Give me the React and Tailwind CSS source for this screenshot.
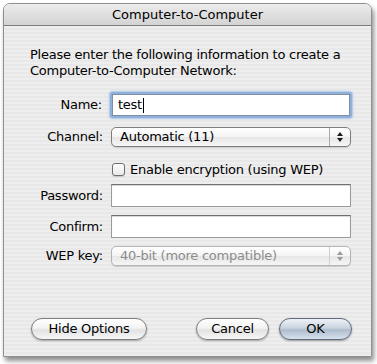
const font = { fontFamily: '"DejaVu Sans", "Liberation Sans", sans-serif' };

function TextField({ value, focused }) {
  if (focused) {
    return (
      <div className="h-[26px] w-[242px] rounded-[3px] p-[2px] bg-[#8eb0d9] shadow-[0_0_2px_1px_#a9c4e6]">
        <div className="flex h-full items-center border border-[#7f8ea3] bg-white pl-[5px] text-[13px] text-black">
          {value}
          <span className="ml-[1px] inline-block h-[15px] w-px bg-black" />
        </div>
      </div>
    );
  }
  return (
    <div className="h-[23px] w-[240px] border border-[#9a9a9a] border-t-[#6f6f6f] bg-white shadow-[inset_0_1px_1px_#d6d6d6]" />
  );
}

function Arrows({ dim }) {
  const c = dim ? '#9a9a9a' : '#1a1a1a';
  return (
    <svg width="8" height="12" viewBox="0 0 8 12">
      <path d="M4 1 L7 5 L1 5 Z" fill={c} />
      <path d="M4 11 L7 7 L1 7 Z" fill={c} />
    </svg>
  );
}

function Popup({ label, disabled }) {
  return (
    <div
      className={`flex h-[20px] w-[240px] items-stretch rounded-[5px] border ${
        disabled ? 'border-[#b4b4b4] text-[#8c8c8c]' : 'border-[#7d7d7d] text-black'
      } bg-[linear-gradient(#ffffff,#f4f4f4_50%,#e6e6e6_51%,#f6f6f6)] shadow-[0_1px_1px_rgba(0,0,0,0.15)]`}
    >
      <div className="flex flex-1 items-center pl-[8px] text-[13px]">{label}</div>
      <div
        className={`flex w-[21px] items-center justify-center border-l ${
          disabled ? 'border-[#cfcfcf]' : 'border-[#a9a9a9]'
        }`}
      >
        <Arrows dim={disabled} />
      </div>
    </div>
  );
}

function Row({ label, children, className = '' }) {
  return (
    <div className={`flex items-center ${className}`}>
      <div className="w-[100px] pr-[1px] text-right text-[13px] text-black">{label}</div>
      <div className="ml-[7px]">{children}</div>
    </div>
  );
}

function AquaButton({ children, width, primary }) {
  return (
    <div
      className={`flex h-[22px] items-center justify-center rounded-full border text-[13px] text-black ${
        primary
          ? 'border-[#5e6b7d] bg-[linear-gradient(#eef2f7,#c9d3df_45%,#aebccd_55%,#d8e2ee)] shadow-[0_1px_2px_rgba(0,0,0,0.35)]'
          : 'border-[#7e7e7e] bg-[linear-gradient(#ffffff,#f3f3f3_45%,#e2e2e2_55%,#f7f7f7)] shadow-[0_1px_2px_rgba(0,0,0,0.3)]'
      }`}
      style={{ width }}
    >
      {children}
    </div>
  );
}

export default function App() {
  return (
    <div className="h-[364px] w-[377px] overflow-hidden bg-white pl-[3px] pt-[3px]" style={font}>
      <div className="flex h-[354px] w-[369px] flex-col overflow-hidden rounded-t-[7px] border border-[#8f8f8f] shadow-[2px_4px_5px_rgba(0,0,0,0.45)]">
        {/* title bar */}
        <div className="flex h-[22px] items-center justify-center border-b border-[#7c7c7c] bg-[linear-gradient(#ececec,#d3d3d3)] text-[13px] text-black">
          Computer-to-Computer
        </div>

        <div className="flex flex-1 flex-col tracking-[-0.25px] bg-[repeating-linear-gradient(180deg,#eeeeee_0px,#eeeeee_2px,#e8e8e8_2px,#e8e8e8_4px)]">
          <p className="ml-[26px] mt-[21px] text-[13px] leading-[16px] text-black">
            Please enter the following information to create a
            <br />
            Computer-to-Computer Network:
          </p>

          <Row label="Name:" className="mt-[13px] -ml-[1px]">
            <TextField value="test" focused />
          </Row>

          <Row label="Channel:" className="mt-[9px]">
            <Popup label="Automatic (11)" />
          </Row>

          <div className="mt-[16px] flex h-[13px] items-center pl-[108px]">
            <div className="h-[13px] w-[13px] rounded-[3px] border border-[#6f6f6f] bg-[linear-gradient(#ffffff,#e9e9e9)] shadow-[0_1px_1px_rgba(0,0,0,0.15)]" />
            <span className="ml-[5px] text-[13px] leading-[13px] text-black">Enable encryption (using WEP)</span>
          </div>

          <Row label="Password:" className="mt-[8px]">
            <TextField />
          </Row>

          <Row label="Confirm:" className="mt-[8px]">
            <TextField />
          </Row>

          <Row label="WEP key:" className="mt-[8px]">
            <Popup label="40-bit (more compatible)" disabled />
          </Row>

          <div className="mt-auto mb-[16px] flex items-center pl-[27px]">
            <AquaButton width={116}>Hide Options</AquaButton>
            <div className="ml-[49px]">
              <AquaButton width={73}>Cancel</AquaButton>
            </div>
            <div className="ml-[10px]">
              <AquaButton width={73} primary>
                OK
              </AquaButton>
            </div>
          </div>
        </div>
      </div>
    </div>
  );
}
